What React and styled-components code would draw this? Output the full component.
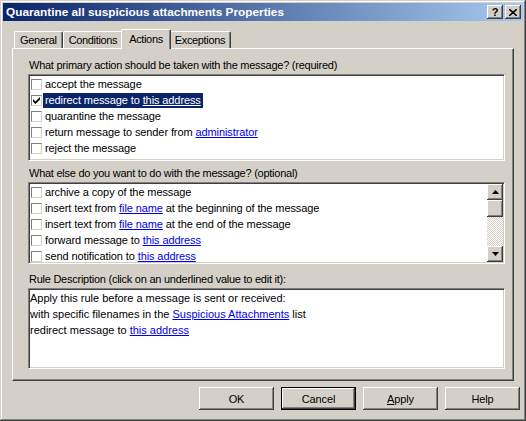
import React from "react";
import styled, { createGlobalStyle, css } from "styled-components";

const GlobalStyle = createGlobalStyle`
  html, body {
    margin: 0;
    padding: 0;
    background: #d4d0c8;
  }
  body {
    font-family: "Liberation Sans", Arial, sans-serif;
    font-size: 11px;
    letter-spacing: -0.1px;
    color: #000;
  }
`;

const raised = css`
  box-shadow: inset -1px -1px #404040, inset 1px 1px #fff,
    inset -2px -2px #808080, inset 2px 2px #d4d0c8;
`;

const Window = styled.div`
  width: 526px;
  height: 421px;
  box-sizing: border-box;
  padding: 3px;
  display: flex;
  flex-direction: column;
  background: #d4d0c8;
  box-shadow: inset -1px -1px #404040, inset 1px 1px #d4d0c8,
    inset -2px -2px #808080, inset 2px 2px #fff;
`;

const TitleBar = styled.div`
  height: 18px;
  display: flex;
  align-items: center;
  padding: 0 2px 0 3px;
  background: linear-gradient(to right, #0a246a, #a6caf0);
  color: #fff;
  font-weight: bold;
  font-size: 11.8px;
  letter-spacing: 0;
`;

const Title = styled.div`
  flex: 1;
  white-space: nowrap;
`;

const TitleButtons = styled.div`
  display: flex;
  gap: 2px;
`;

const TitleButton = styled.div`
  width: 16px;
  height: 14px;
  box-sizing: border-box;
  background: #d4d0c8;
  ${raised};
  display: flex;
  align-items: center;
  justify-content: center;
  color: #000;
  font-weight: bold;
  font-size: 11px;
  line-height: 14px;
`;

const Content = styled.div`
  flex: 1;
  display: flex;
  flex-direction: column;
  padding: 8px 9px 0 9px;
`;

const TabRow = styled.div`
  height: 19px;
  display: flex;
  align-items: flex-start;
  padding-left: 2px;
`;

const Tab = styled.div`
  position: relative;
  box-sizing: border-box;
  height: ${(p) => (p.$active ? 20 : 17)}px;
  margin: ${(p) => (p.$active ? "0 -2px 0 -2px" : "2px 0 0 0")};
  padding: ${(p) => (p.$active ? "2px 7px 0" : "1px 5px 0")};
  z-index: ${(p) => (p.$active ? 2 : 1)};
  background: #d4d0c8;
  border-top: 1px solid #fff;
  border-left: 1px solid #fff;
  border-right: 1px solid #404040;
  border-radius: 2px 2px 0 0;
  box-shadow: inset -1px 0 #808080;
  line-height: 14px;
  letter-spacing: -0.35px;
  white-space: nowrap;
`;

const Panel = styled.div`
  height: 333px;
  box-sizing: border-box;
  border: 1px solid;
  border-color: #fff #404040 #404040 #fff;
  box-shadow: inset -1px -1px #808080;
  padding: 9px 8px 0 15px;
  display: flex;
  flex-direction: column;
`;

const Label = styled.div`
  line-height: 14px;
  margin-top: ${(p) => p.$gap || 0}px;
  margin-bottom: 2px;
  padding-left: 1px;
  letter-spacing: -0.25px;
  white-space: nowrap;
`;

const Sunken = styled.div`
  height: ${(p) => p.$h}px;
  box-sizing: border-box;
  background: #fff;
  border: 1px solid;
  border-color: #808080 #fff #fff #808080;
  box-shadow: inset 1px 1px #404040, inset -1px -1px #d4d0c8;
  padding: 1px;
  display: flex;
`;

const List = styled.div`
  flex: 1;
  display: flex;
  flex-direction: column;
  overflow: hidden;
`;

const Row = styled.div`
  height: 16px;
  flex: none;
  display: flex;
  align-items: center;
  padding-left: 1px;
  white-space: nowrap;
`;

const Check = styled.div`
  width: 11px;
  height: 11px;
  flex: none;
  box-sizing: border-box;
  background: #fff;
  border: 1px solid;
  border-color: #808080 #d4d0c8 #d4d0c8 #808080;
  margin-right: 1px;
  display: flex;
  align-items: center;
  justify-content: center;
`;

const RowText = styled.span`
  padding: 0 2px;
  line-height: 15px;
  background: ${(p) => (p.$selected ? "#0a246a" : "transparent")};
  color: ${(p) => (p.$selected ? "#fff" : "#000")};
`;

const Link = styled.span`
  color: ${(p) => (p.$light ? "#fff" : "#0000ee")};
  text-decoration: underline;
`;

const ScrollBar = styled.div`
  width: 16px;
  flex: none;
  display: flex;
  flex-direction: column;
`;

const ScrollButton = styled.div`
  width: 16px;
  height: ${(p) => p.$h || 16}px;
  flex: none;
  box-sizing: border-box;
  background: #d4d0c8;
  ${raised};
  display: flex;
  align-items: center;
  justify-content: center;
`;

const Track = styled.div`
  flex: 1;
  background: repeating-conic-gradient(#fff 0 25%, #d4d0c8 0 50%) 0 0 / 2px 2px;
`;

const Description = styled.div`
  flex: 1;
`;

const DescLine = styled.div`
  line-height: 16px;
  letter-spacing: 0;
  white-space: nowrap;
`;

const ButtonRow = styled.div`
  display: flex;
  justify-content: flex-end;
  gap: 7px;
  margin: 6px -6px 0 0;
`;

const Button = styled.div`
  width: 75px;
  height: 23px;
  box-sizing: border-box;
  background: #d4d0c8;
  display: flex;
  align-items: center;
  justify-content: center;
  ${(p) =>
    p.$default
      ? css`
          border: 1px solid #000;
          box-shadow: inset -1px -1px #404040, inset 1px 1px #fff,
            inset -2px -2px #808080;
        `
      : raised};
`;

const CheckMark = () => (
  <svg width="7" height="7" viewBox="0 0 7 7">
    <path d="M0 2 L0 4.5 L2.5 7 L7 2.5 L7 0 L2.5 4.5 Z" fill="#000" />
  </svg>
);

const Arrow = ({ down }) => (
  <svg width="7" height="4" viewBox="0 0 7 4">
    <path d={down ? "M0 0 H7 L3.5 4 Z" : "M0 4 H7 L3.5 0 Z"} fill="#000" />
  </svg>
);

const CloseIcon = () => (
  <svg width="8" height="7" viewBox="0 0 8 7">
    <path d="M0 0 L8 7 M8 0 L0 7" stroke="#000" strokeWidth="1.6" />
  </svg>
);

const primaryActions = [
  { text: "accept the message" },
  { text: "redirect message to ", link: "this address", checked: true },
  { text: "quarantine the message" },
  { text: "return message to sender from ", link: "administrator" },
  { text: "reject the message" },
];

const otherActions = [
  { text: "archive a copy of the message" },
  { text: "insert text from ", link: "file name", after: " at the beginning of the message" },
  { text: "insert text from ", link: "file name", after: " at the end of the message" },
  { text: "forward message to ", link: "this address" },
  { text: "send notification to ", link: "this address" },
];

function ActionRow({ item }) {
  return (
    <Row>
      <Check>{item.checked && <CheckMark />}</Check>
      <RowText $selected={item.checked}>
        {item.text}
        {item.link && <Link $light={item.checked}>{item.link}</Link>}
        {item.after}
      </RowText>
    </Row>
  );
}

export default function App() {
  return (
    <>
      <GlobalStyle />
      <Window>
        <TitleBar>
          <Title>Quarantine all suspicious attachments Properties</Title>
          <TitleButtons>
            <TitleButton>?</TitleButton>
            <TitleButton>
              <CloseIcon />
            </TitleButton>
          </TitleButtons>
        </TitleBar>

        <Content>
          <TabRow>
            <Tab>General</Tab>
            <Tab>Conditions</Tab>
            <Tab $active>Actions</Tab>
            <Tab>Exceptions</Tab>
          </TabRow>

          <Panel>
            <Label>What primary action should be taken with the message? (required)</Label>
            <Sunken $h={87}>
              <List>
                {primaryActions.map((a, i) => (
                  <ActionRow key={i} item={a} />
                ))}
              </List>
            </Sunken>

            <Label $gap={5}>What else do you want to do with the message? (optional)</Label>
            <Sunken $h={82}>
              <List>
                {otherActions.map((a, i) => (
                  <ActionRow key={i} item={a} />
                ))}
              </List>
              <ScrollBar>
                <ScrollButton>
                  <Arrow />
                </ScrollButton>
                <ScrollButton $h={17} />
                <Track />
                <ScrollButton>
                  <Arrow down />
                </ScrollButton>
              </ScrollBar>
            </Sunken>

            <Label $gap={8}>Rule Description (click on an underlined value to edit it):</Label>
            <Sunken $h={81}>
              <Description>
                <DescLine>Apply this rule before a message is sent or received:</DescLine>
                <DescLine>
                  with specific filenames in the <Link>Suspicious Attachments</Link> list
                </DescLine>
                <DescLine>
                  redirect message to <Link>this address</Link>
                </DescLine>
              </Description>
            </Sunken>
          </Panel>

          <ButtonRow>
            <Button>OK</Button>
            <Button $default>Cancel</Button>
            <Button>
              <span>
                <u>A</u>pply
              </span>
            </Button>
            <Button>Help</Button>
          </ButtonRow>
        </Content>
      </Window>
    </>
  );
}
